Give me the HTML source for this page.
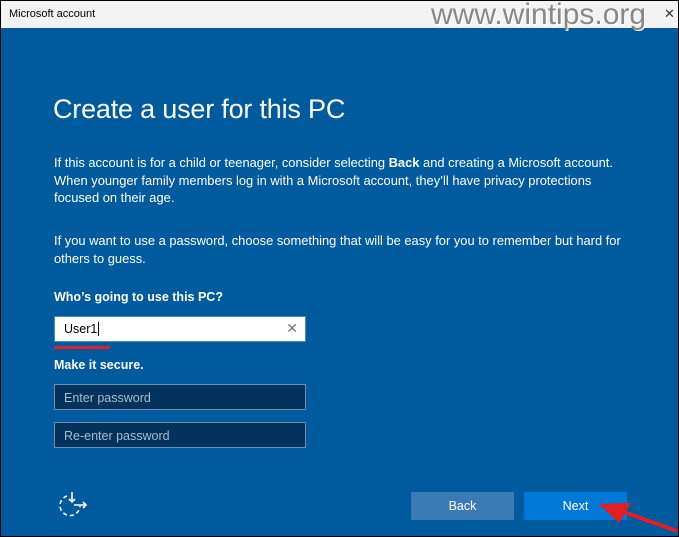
<!DOCTYPE html>
<html><head><meta charset="utf-8"><style>
*{margin:0;padding:0;box-sizing:border-box}
body{width:679px;height:537px;overflow:hidden;background:#000;font-family:"Liberation Sans",sans-serif;position:relative}
#win{position:absolute;left:1px;top:1px;width:677px;height:535px;background:#005a9e}
#tb{position:absolute;left:0;top:0;width:677px;height:27px;background:#f3f3f3;color:#000;font-size:11px}
.t{position:absolute;color:#fff;white-space:nowrap}
p.t{font-size:12.9px;line-height:17.5px}
.box{position:absolute;left:53px;width:252px;height:26px}
.btn{position:absolute;top:491px;height:28px;color:#fff;font-size:12.5px;text-align:center;line-height:28px}
</style></head><body>
<div id="win">
<div id="tb"><span style="position:absolute;left:8px;top:7px">Microsoft account</span>
<span style="position:absolute;left:430px;top:-3px;font-size:30px;color:#888;text-shadow:1px 1px 0 #fff">www.wintips.org</span>
<span style="position:absolute;left:663px;top:5px;font-size:13px;color:#333">✕</span></div>
<div class="t" style="left:52px;top:93px;font-size:27px;font-weight:300;letter-spacing:-0.2px">Create a user for this PC</div>
<p class="t" style="left:53px;top:153px">If this account is for a child or teenager, consider selecting <b>Back</b> and creating a Microsoft account.<br>When younger family members log in with a Microsoft account, they’ll have privacy protections<br>focused on their age.</p>
<p class="t" style="left:53px;top:231px">If you want to use a password, choose something that will be easy for you to remember but hard for<br>others to guess.</p>
<div class="t" style="left:53px;top:289px;font-size:12.5px;font-weight:bold">Who’s going to use this PC?</div>
<div class="box" style="top:315px;background:#fff;border:1px solid #4b8ac4"><span style="position:absolute;left:9px;top:5px;font-size:12.5px;color:#000">User1<span style="border-left:1px solid #000;margin-left:1px"></span></span><span style="position:absolute;right:7px;top:3px;font-size:14px;color:#777">✕</span></div>
<div style="position:absolute;left:53px;top:345px;width:56px;height:3px;background:#e0202a"></div>
<div class="t" style="left:53px;top:357px;font-size:12.5px;font-weight:bold">Make it secure.</div>
<div class="box" style="top:383px;background:#03335c;border:1px solid #6b8eb0"><span style="position:absolute;left:9px;top:6px;font-size:12.5px;color:#a9bbcc">Enter password</span></div>
<div class="box" style="top:421px;background:#03335c;border:1px solid #6b8eb0"><span style="position:absolute;left:9px;top:6px;font-size:12.5px;color:#a9bbcc">Re-enter password</span></div>
<svg style="position:absolute;left:57px;top:490px" width="32" height="30" viewBox="0 0 32 30" fill="none" stroke="#fff" stroke-width="1.6">
<path d="M9 5 A10 10 0 1 0 22 15" stroke-dasharray="4 3"/><path d="M14 1v10M11 8l3 3 3-3M16 14h12M25 11l3 3-3 3"/></svg>
<div class="btn" style="left:410px;width:103px;background:#3a7ab5">Back</div>
<div class="btn" style="left:523px;width:103px;background:#0078d7">Next</div>
<svg style="position:absolute;left:590px;top:498px" width="90" height="38" viewBox="0 0 90 38"><path d="M86 32L30 12" stroke="#e31e24" stroke-width="4"/><path d="M8 5L40 4 28 24Z" fill="#e31e24"/></svg>
</div>
</body></html>
